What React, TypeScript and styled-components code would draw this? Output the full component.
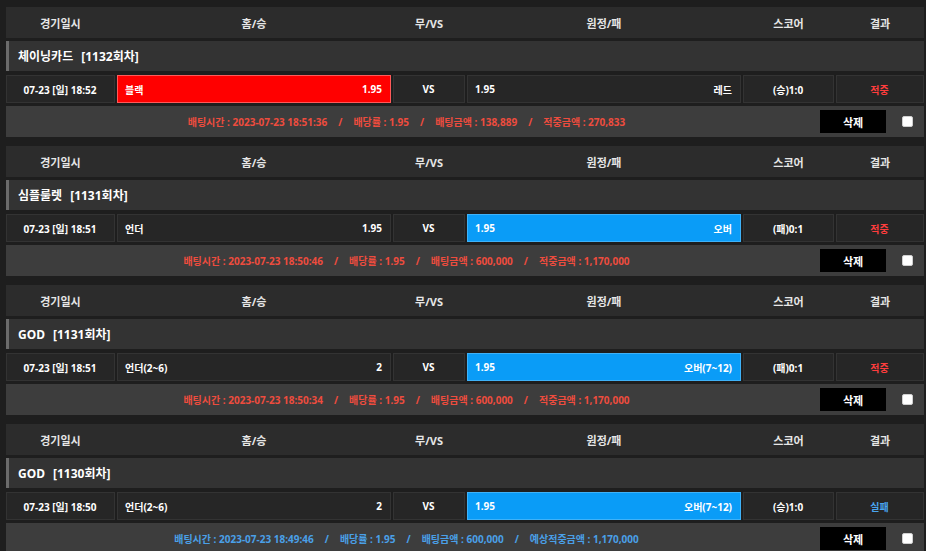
import React from "react";
import styled, { createGlobalStyle } from "styled-components";

const GlobalStyle = createGlobalStyle`
  html, body {
    margin: 0;
    padding: 0;
    background: #1e1e1e;
  }
  body {
    font-family: "Noto Sans", "Noto Sans CJK KR", sans-serif;
    font-weight: 700;
    color: #fff;
  }
`;

const COLS = "109px 274px 72px 274px 91px 88px";

const Page = styled.div`
  padding: 7px 2px 0 6px;
  display: flex;
  flex-direction: column;
  gap: 9px;
`;

const Block = styled.section`
  display: flex;
  flex-direction: column;
`;

const HeaderRow = styled.div`
  display: grid;
  grid-template-columns: ${COLS};
  column-gap: 2px;
  height: 31px;
  background: #2c2c2c;
  margin-bottom: 3px;
`;

const HeaderCell = styled.div`
  display: flex;
  align-items: center;
  justify-content: center;
  font-size: 11px;
  color: #e6e6e6;
`;

const TitleRow = styled.div`
  height: 30px;
  background: #333333;
  border-left: 3px solid #6b6b6b;
  display: flex;
  align-items: center;
  padding-left: 9px;
  font-size: 12px;
  color: #ffffff;
  margin-bottom: 4px;
`;

const Round = styled.span`
  margin-left: 8px;
`;

const DataRow = styled.div`
  display: grid;
  grid-template-columns: ${COLS};
  column-gap: 2px;
  height: 28px;
  margin-bottom: 3px;
`;

const Cell = styled.div<{ $hl?: "red" | "blue"; $align?: "center" | "split" }>`
  box-sizing: border-box;
  display: flex;
  align-items: center;
  justify-content: ${(p) => (p.$align === "split" ? "space-between" : "center")};
  padding: 0 8px 0 7px;
  font-size: 10px;
  color: #ffffff;
  background: ${(p) => (p.$hl === "red" ? "#ff0000" : p.$hl === "blue" ? "#0a9cf7" : "#262626")};
  border: 1px solid
    ${(p) => (p.$hl === "red" ? "#ff5a5a" : p.$hl === "blue" ? "#3fb2f8" : "#333333")};
`;

const Result = styled.span<{ $win: boolean }>`
  color: ${(p) => (p.$win ? "#ff3d3d" : "#4aa5ef")};
`;

const InfoRow = styled.div`
  height: 31px;
  background: #3d3d3d;
  display: flex;
  align-items: center;
`;

const InfoText = styled.div<{ $win: boolean }>`
  flex: 1;
  text-align: center;
  font-size: 10px;
  color: ${(p) => (p.$win ? "#ee4c3e" : "#4aa0e8")};
  white-space: pre;
`;

const Sep = styled.span`
  margin: 0 11px;
`;

const DeleteButton = styled.button`
  width: 66px;
  height: 23px;
  margin-left: 13px;
  border: none;
  background: #000000;
  color: #ffffff;
  font-family: "Noto Sans", "Noto Sans CJK KR", sans-serif;
  font-weight: 700;
  font-size: 11px;
  padding: 0;
  cursor: pointer;
`;

const Check = styled.span`
  box-sizing: border-box;
  width: 11px;
  height: 11px;
  margin: 0 11px 0 16px;
  background: #ffffff;
  border: 1px solid #cfcfcf;
  border-radius: 2px;
`;

type Bet = {
  name: string;
  round: string;
  date: string;
  home: string;
  homeOdds: string;
  awayOdds: string;
  away: string;
  pick: "home" | "away";
  score: string;
  win: boolean;
  time: string;
  odds: string;
  amount: string;
  payoutLabel: string;
  payout: string;
};

const bets: Bet[] = [
  {
    name: "체이닝카드",
    round: "[1132회차]",
    date: "07-23 [일] 18:52",
    home: "블랙",
    homeOdds: "1.95",
    awayOdds: "1.95",
    away: "레드",
    pick: "home",
    score: "(승)1:0",
    win: true,
    time: "2023-07-23 18:51:36",
    odds: "1.95",
    amount: "138,889",
    payoutLabel: "적중금액",
    payout: "270,833",
  },
  {
    name: "심플룰렛",
    round: "[1131회차]",
    date: "07-23 [일] 18:51",
    home: "언더",
    homeOdds: "1.95",
    awayOdds: "1.95",
    away: "오버",
    pick: "away",
    score: "(패)0:1",
    win: true,
    time: "2023-07-23 18:50:46",
    odds: "1.95",
    amount: "600,000",
    payoutLabel: "적중금액",
    payout: "1,170,000",
  },
  {
    name: "GOD",
    round: "[1131회차]",
    date: "07-23 [일] 18:51",
    home: "언더(2~6)",
    homeOdds: "2",
    awayOdds: "1.95",
    away: "오버(7~12)",
    pick: "away",
    score: "(패)0:1",
    win: true,
    time: "2023-07-23 18:50:34",
    odds: "1.95",
    amount: "600,000",
    payoutLabel: "적중금액",
    payout: "1,170,000",
  },
  {
    name: "GOD",
    round: "[1130회차]",
    date: "07-23 [일] 18:50",
    home: "언더(2~6)",
    homeOdds: "2",
    awayOdds: "1.95",
    away: "오버(7~12)",
    pick: "away",
    score: "(승)1:0",
    win: false,
    time: "2023-07-23 18:49:46",
    odds: "1.95",
    amount: "600,000",
    payoutLabel: "예상적중금액",
    payout: "1,170,000",
  },
];

const headers = ["경기일시", "홈/승", "무/VS", "원정/패", "스코어", "결과"];

export default function App() {
  return (
    <>
      <GlobalStyle />
      <Page>
        {bets.map((b, i) => (
          <Block key={i}>
            <HeaderRow>
              {headers.map((h) => (
                <HeaderCell key={h}>{h}</HeaderCell>
              ))}
            </HeaderRow>
            <TitleRow>
              {b.name}
              <Round>{b.round}</Round>
            </TitleRow>
            <DataRow>
              <Cell>{b.date}</Cell>
              <Cell $align="split" $hl={b.pick === "home" ? "red" : undefined}>
                <span>{b.home}</span>
                <span>{b.homeOdds}</span>
              </Cell>
              <Cell>VS</Cell>
              <Cell $align="split" $hl={b.pick === "away" ? "blue" : undefined}>
                <span>{b.awayOdds}</span>
                <span>{b.away}</span>
              </Cell>
              <Cell>{b.score}</Cell>
              <Cell>
                <Result $win={b.win}>{b.win ? "적중" : "실패"}</Result>
              </Cell>
            </DataRow>
            <InfoRow>
              <InfoText $win={b.win}>
                배팅시간 : {b.time}
                <Sep>/</Sep>배당률 : {b.odds}
                <Sep>/</Sep>배팅금액 : {b.amount}
                <Sep>/</Sep>
                {b.payoutLabel} : {b.payout}
              </InfoText>
              <DeleteButton>삭제</DeleteButton>
              <Check />
            </InfoRow>
          </Block>
        ))}
      </Page>
    </>
  );
}
